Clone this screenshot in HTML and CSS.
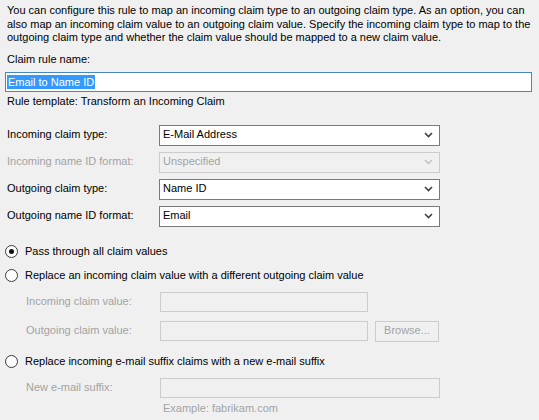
FILE: index.html
```html
<!DOCTYPE html>
<html>
<head>
<meta charset="utf-8">
<link rel="stylesheet" href="styles.css">
</head>
<body>
<div class="page">
  <p class="intro">You can configure this rule to map an incoming claim type to an outgoing claim type. As an option, you can also map an incoming claim value to an outgoing claim value. Specify the incoming claim type to map to the outgoing claim type and whether the claim value should be mapped to a new claim value.</p>

  <div class="label name-label">Claim rule name:</div>
  <div class="textbox focused"><span class="selected">Email to Name ID</span></div>

  <div class="label template">Rule template: Transform an Incoming Claim</div>

  <div class="fields">
    <div class="label">Incoming claim type:</div>
    <div class="select"><span class="value">E-Mail Address</span><span class="arrow"><svg width="9" height="6" viewBox="0 0 9 6"><path d="M1 1 L4.5 4.5 L8 1" fill="none" stroke="#404040" stroke-width="1.6"/></svg></span></div>

    <div class="label disabled">Incoming name ID format:</div>
    <div class="select is-disabled"><span class="value">Unspecified</span><span class="arrow"><svg width="9" height="6" viewBox="0 0 9 6"><path d="M1 1 L4.5 4.5 L8 1" fill="none" stroke="#c0c0c0" stroke-width="1.4"/></svg></span></div>

    <div class="label">Outgoing claim type:</div>
    <div class="select"><span class="value">Name ID</span><span class="arrow"><svg width="9" height="6" viewBox="0 0 9 6"><path d="M1 1 L4.5 4.5 L8 1" fill="none" stroke="#404040" stroke-width="1.6"/></svg></span></div>

    <div class="label">Outgoing name ID format:</div>
    <div class="select"><span class="value">Email</span><span class="arrow"><svg width="9" height="6" viewBox="0 0 9 6"><path d="M1 1 L4.5 4.5 L8 1" fill="none" stroke="#404040" stroke-width="1.6"/></svg></span></div>
  </div>

  <div class="radio-row first"><span class="radio checked"></span><span class="label">Pass through all claim values</span></div>
  <div class="radio-row second"><span class="radio"></span><span class="label">Replace an incoming claim value with a different outgoing claim value</span></div>

  <div class="sub">
    <div class="sub-row">
      <span class="label disabled">Incoming claim value:</span>
      <div class="textbox is-disabled short"></div>
    </div>
    <div class="sub-row">
      <span class="label disabled">Outgoing claim value:</span>
      <div class="textbox is-disabled short"></div>
      <div class="button is-disabled">Browse...</div>
    </div>
  </div>

  <div class="radio-row third"><span class="radio"></span><span class="label">Replace incoming e-mail suffix claims with a new e-mail suffix</span></div>

  <div class="sub">
    <div class="sub-row suffix">
      <span class="label disabled">New e-mail suffix:</span>
      <div class="textbox is-disabled wide"></div>
    </div>
    <div class="example">Example: fabrikam.com</div>
  </div>
</div>
</body>
</html>
```

FILE: styles.css
```css
html, body {
  margin: 0;
  padding: 0;
  background: #f0f0f0;
}

body {
  font-family: "Liberation Sans", Arial, sans-serif;
  font-size: 11px;
  color: #000;
  line-height: 13.5px;
}

.page {
  padding: 4px 7px 0 7px;
  width: 525px;
}

.intro {
  margin: 0;
}

.label {
  white-space: nowrap;
}

.disabled {
  color: #a3a3a3;
}

.name-label {
  margin-top: 8px;
}

.textbox {
  box-sizing: border-box;
  height: 20px;
  border: 1px solid #adadad;
  background: #fff;
}

.textbox.focused {
  margin-top: 6px;
  margin-left: -2px;
  width: 527px;
  border-color: #4a86c0;
  padding: 2px 0 0 1px;
}

.selected {
  background: #3399ff;
  color: #fff;
  display: inline-block;
  line-height: 14px;
  padding: 0 1px;
}

.template {
  margin-top: 3px;
}

.fields {
  margin-top: 16px;
  display: grid;
  grid-template-columns: 152px 281px;
  grid-auto-rows: 21px;
  row-gap: 6px;
  align-items: center;
}

.select {
  box-sizing: border-box;
  height: 21px;
  border: 1px solid #7a7a7a;
  background: #fff;
  display: flex;
  align-items: center;
  justify-content: space-between;
  padding: 0 6px 0 3px;
}

.select.is-disabled {
  border-color: #cccccc;
  background: #f0f0f0;
}

.select.is-disabled .value {
  color: #a3a3a3;
}

.arrow {
  display: flex;
  align-items: center;
}

.radio-row {
  display: flex;
  align-items: center;
  height: 14px;
}

.radio-row.first {
  margin-top: 18px;
}

.radio-row.second {
  margin-top: 10px;
}

.radio-row.third {
  margin-top: 13px;
}

.radio {
  box-sizing: border-box;
  width: 13px;
  height: 13px;
  border: 1px solid #3a3a3a;
  border-radius: 50%;
  background: #fff;
  margin-left: -2px;
  margin-right: 7px;
  display: flex;
  align-items: center;
  justify-content: center;
}

.radio.checked::after {
  content: "";
  width: 5px;
  height: 5px;
  border-radius: 50%;
  background: #111;
}

.sub {
  padding-left: 19px;
}

.sub-row {
  display: flex;
  align-items: center;
  margin-top: 9px;
}

.sub-row .label {
  width: 134px;
}

.sub-row.suffix {
  margin-top: 9px;
}

.textbox.is-disabled {
  border-color: #cccccc;
  background: #f0f0f0;
}

.textbox.short {
  width: 208px;
}

.textbox.wide {
  width: 280px;
}

.button {
  box-sizing: border-box;
  margin-left: 7px;
  width: 64px;
  height: 21px;
  border: 1px solid #cccccc;
  background: #f0f0f0;
  color: #a3a3a3;
  display: flex;
  align-items: center;
  justify-content: center;
}

.example {
  margin-top: 4px;
  padding-left: 137px;
  color: #a3a3a3;
}
```
